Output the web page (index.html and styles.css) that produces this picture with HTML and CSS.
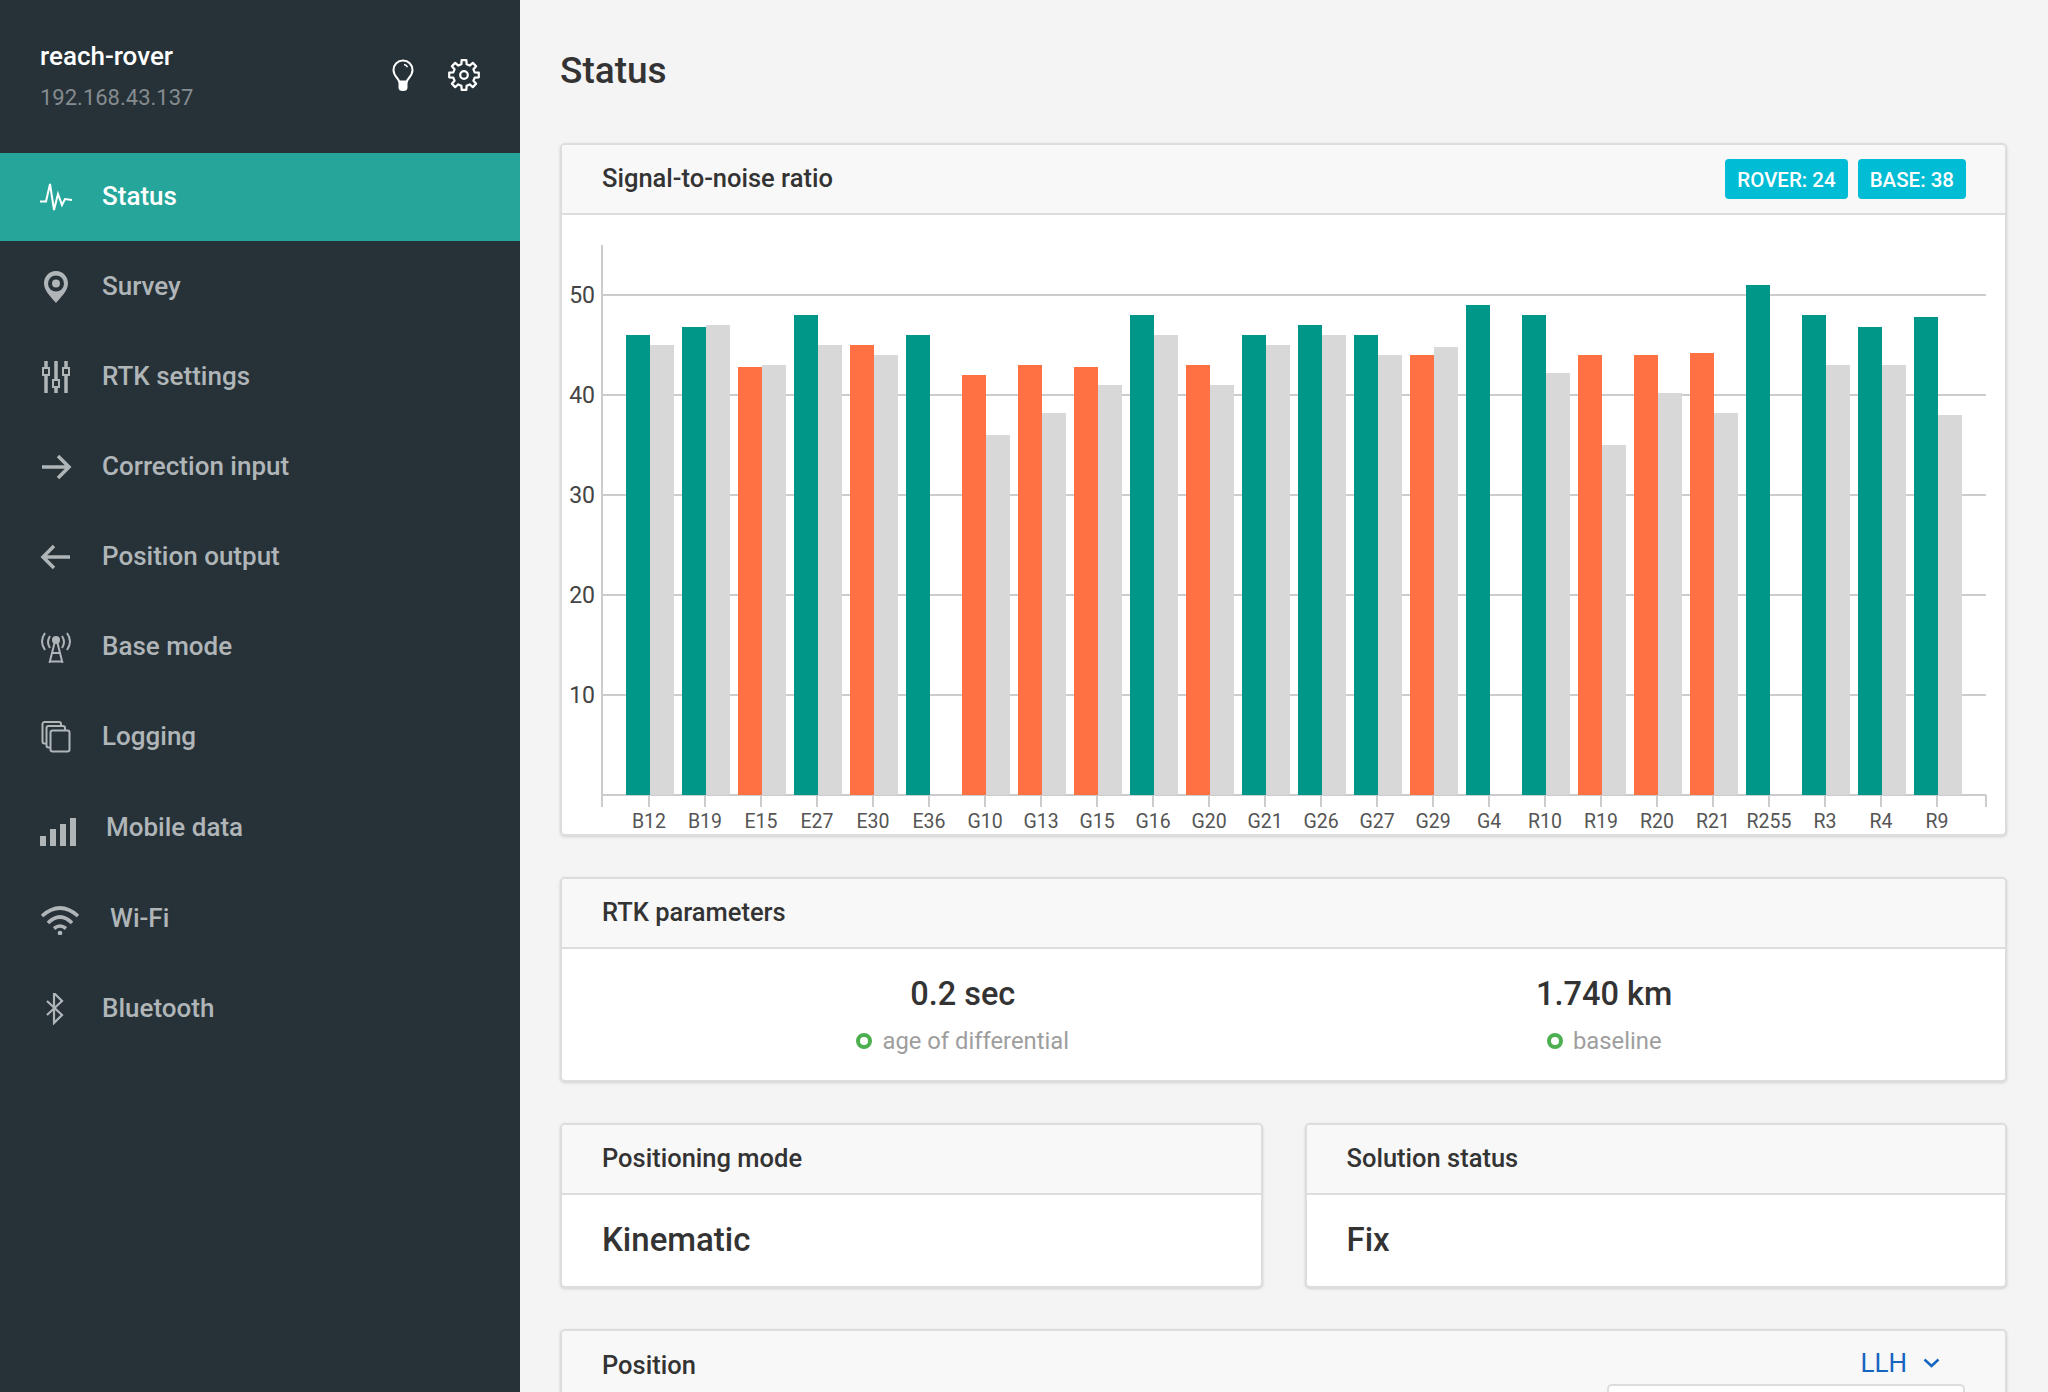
FILE: index.html
```html
<!DOCTYPE html>
<html lang="en">
<head>
    <meta charset="UTF-8">
    <title>Status - reach-rover</title>
    <link rel="stylesheet" href="styles.css">
</head>
<body>

    <aside class="sidebar">
        <div class="device">
            <div class="device-info">
                <div class="device-name">reach-rover</div>
                <div class="device-ip">192.168.43.137</div>
            </div>
            <svg class="device-icon bulb" viewBox="0 0 24 32">
                <path d="M8 22.500c0-3-5.500-5-5.500-11.500a9.500 9.500 0 0 1 19 0c0 6.500-5.500 8.500-5.500 11.500z" fill="none" stroke="#fff" stroke-width="2"/>
                <path d="M7.500 22h9v6.500a4.500 3.500 0 0 1-9 0z" fill="#fff"/>
                <path d="M13 5.500c1.500.3 2.800 1.200 3.500 2.600" fill="none" stroke="#fff" stroke-width="1.400"/>
            </svg>
            <svg class="device-icon gear" viewBox="0 0 32 32">
                <path d="M13.340 5.330L13.650 1.200H18.350L18.660 5.330L21.670 6.570L24.820 3.860L28.140 7.180L25.430 10.330L26.670 13.340L30.800 13.650V18.350L26.670 18.660L25.430 21.670L28.140 24.820L24.820 28.140L21.670 25.430L18.660 26.670L18.350 30.800H13.650L13.340 26.670L10.330 25.430L7.180 28.140L3.860 24.820L6.570 21.670L5.330 18.660L1.200 18.350V13.650L5.330 13.340L6.570 10.330L3.860 7.180L7.180 3.860L10.330 6.570z" fill="none" stroke="#fff" stroke-width="2.200" stroke-linejoin="round"/>
                <circle cx="16" cy="16" r="3.800" fill="none" stroke="#fff" stroke-width="2.200"/>
            </svg>
        </div>

        <nav class="menu">
            <a class="menu-item active" href="#">
                <svg class="menu-icon" width="32" height="32" viewBox="0 0 32 32">
                    <path class="line thin" d="M0 20.500H6L10 3L14 29L18 13L22 24L25 18L32 19"/>
                </svg>
                <span class="menu-label">Status</span>
            </a>
            <a class="menu-item" href="#">
                <svg class="menu-icon" width="32" height="32" viewBox="0 0 32 32">
                    <path class="fill" d="M16 0C9 0 4 5.500 4 12.500C4 20 12 27 16 32C20 27 28 20 28 12.500C28 5.500 23 0 16 0z"/>
                    <circle cx="16" cy="12.500" r="8" fill="#263238"/>
                    <circle class="fill" cx="16" cy="12.500" r="4"/>
                </svg>
                <span class="menu-label">Survey</span>
            </a>
            <a class="menu-item" href="#">
                <svg class="menu-icon" width="32" height="32" viewBox="0 0 32 32">
                    <path class="line" d="M6 0V7M6 14V32M16 0V19M16 26V32M26 0V7M26 14V32"/>
                    <path class="line thin" d="M3 7h6v7H3zM13 19h6v7h-6zM23 7h6v7h-6z"/>
                </svg>
                <span class="menu-label">RTK settings</span>
            </a>
            <a class="menu-item" href="#">
                <svg class="menu-icon" width="32" height="32" viewBox="0 0 32 32">
                    <path class="line" d="M2 16H29M18 5L29 16L18 27"/>
                </svg>
                <span class="menu-label">Correction input</span>
            </a>
            <a class="menu-item" href="#">
                <svg class="menu-icon" width="32" height="32" viewBox="0 0 32 32">
                    <path class="line" d="M30 16H3M14 5L3 16L14 27"/>
                </svg>
                <span class="menu-label">Position output</span>
            </a>
            <a class="menu-item" href="#">
                <svg class="menu-icon" width="32" height="32" viewBox="0 0 32 32">
                    <circle class="fill" cx="16" cy="9" r="4"/>
                    <path class="line thin" d="M14.500 12L9.500 32M17.500 12L22.500 32M12.500 22H19.500M10 30.500H22"/>
                    <path class="line thin" d="M5 2Q-1 10.500 5 19M10 5Q6 11 10 17M27 2Q33 10.500 27 19M22 5Q26 11 22 17"/>
                </svg>
                <span class="menu-label">Base mode</span>
            </a>
            <a class="menu-item" href="#">
                <svg class="menu-icon" width="32" height="32" viewBox="0 0 32 32">
                    <rect class="line thin" x="10.500" y="9.500" width="19" height="21" rx="2"/>
                    <path class="line thin" d="M10.500 26.500H8.500a2 2 0 0 1-2-2V7a2 2 0 0 1 2-2H23a2 2 0 0 1 2 2v2.500"/>
                    <path class="line thin" d="M6.500 22.500H4.500a2 2 0 0 1-2-2V3a2 2 0 0 1 2-2H19a2 2 0 0 1 2 2v2"/>
                </svg>
                <span class="menu-label">Logging</span>
            </a>
            <a class="menu-item tall" href="#">
                <svg class="menu-icon" width="36" height="36" viewBox="0 0 36 36">
                    <path class="fill" d="M0 26h6v10H0zM10 19h6v17h-6zM20 14h6v22h-6zM30 8h6v28h-6z"/>
                </svg>
                <span class="menu-label">Mobile data</span>
            </a>
            <a class="menu-item" href="#">
                <svg class="menu-icon" width="40" height="32" viewBox="0 0 40 32">
                    <path class="line wifi" d="M2 13Q20 -3 38 13M8 20Q20 8 32 20M14 25.500Q20 20.500 26 25.500"/>
                    <circle class="fill" cx="20" cy="30" r="2.300"/>
                </svg>
                <span class="menu-label">Wi-Fi</span>
            </a>
            <a class="menu-item" href="#">
                <svg class="menu-icon" width="32" height="32" viewBox="0 0 32 32">
                    <path class="line bt" d="M7 8L22 22L14 30V0L22 8L7 22"/>
                </svg>
                <span class="menu-label">Bluetooth</span>
            </a>
        </nav>
    </aside>

    <main class="content">
        <h1 class="page-title">Status</h1>

        <section class="card snr-card">
            <header class="card-head">
                <h2 class="card-title">Signal-to-noise ratio</h2>
                <div class="badges">
                    <span class="badge">ROVER: 24</span>
                    <span class="badge">BASE: 38</span>
                </div>
            </header>
            <svg class="chart" width="1443" height="619" viewBox="562 215 1443 619">
                <g class="grid">
                    <path d="M602 245V807M602 295H1986M602 395H1986M602 495H1986M602 595H1986M602 695H1986M602 795H1986"/>
                    <path d="M649 795v12M705 795v12M761 795v12M817 795v12M873 795v12M929 795v12M985 795v12M1041 795v12M1097 795v12M1153 795v12M1209 795v12M1265 795v12M1321 795v12M1377 795v12M1433 795v12M1489 795v12M1545 795v12M1601 795v12M1657 795v12M1713 795v12M1769 795v12M1825 795v12M1881 795v12M1937 795v12M1986 795v12"/>
                </g>
                <g class="y-labels">
                    <text x="595" y="303">50</text>
                    <text x="595" y="403">40</text>
                    <text x="595" y="503">30</text>
                    <text x="595" y="603">20</text>
                    <text x="595" y="703">10</text>
                </g>
                <g class="bars">
                    <rect class="fix" x="626" y="335" width="24" height="460"/><rect class="base" x="650" y="345" width="24" height="450"/>
                    <rect class="fix" x="682" y="327" width="24" height="468"/><rect class="base" x="706" y="325" width="24" height="470"/>
                    <rect class="float" x="738" y="367" width="24" height="428"/><rect class="base" x="762" y="365" width="24" height="430"/>
                    <rect class="fix" x="794" y="315" width="24" height="480"/><rect class="base" x="818" y="345" width="24" height="450"/>
                    <rect class="float" x="850" y="345" width="24" height="450"/><rect class="base" x="874" y="355" width="24" height="440"/>
                    <rect class="fix" x="906" y="335" width="24" height="460"/>
                    <rect class="float" x="962" y="375" width="24" height="420"/><rect class="base" x="986" y="435" width="24" height="360"/>
                    <rect class="float" x="1018" y="365" width="24" height="430"/><rect class="base" x="1042" y="413" width="24" height="382"/>
                    <rect class="float" x="1074" y="367" width="24" height="428"/><rect class="base" x="1098" y="385" width="24" height="410"/>
                    <rect class="fix" x="1130" y="315" width="24" height="480"/><rect class="base" x="1154" y="335" width="24" height="460"/>
                    <rect class="float" x="1186" y="365" width="24" height="430"/><rect class="base" x="1210" y="385" width="24" height="410"/>
                    <rect class="fix" x="1242" y="335" width="24" height="460"/><rect class="base" x="1266" y="345" width="24" height="450"/>
                    <rect class="fix" x="1298" y="325" width="24" height="470"/><rect class="base" x="1322" y="335" width="24" height="460"/>
                    <rect class="fix" x="1354" y="335" width="24" height="460"/><rect class="base" x="1378" y="355" width="24" height="440"/>
                    <rect class="float" x="1410" y="355" width="24" height="440"/><rect class="base" x="1434" y="347" width="24" height="448"/>
                    <rect class="fix" x="1466" y="305" width="24" height="490"/>
                    <rect class="fix" x="1522" y="315" width="24" height="480"/><rect class="base" x="1546" y="373" width="24" height="422"/>
                    <rect class="float" x="1578" y="355" width="24" height="440"/><rect class="base" x="1602" y="445" width="24" height="350"/>
                    <rect class="float" x="1634" y="355" width="24" height="440"/><rect class="base" x="1658" y="393" width="24" height="402"/>
                    <rect class="float" x="1690" y="353" width="24" height="442"/><rect class="base" x="1714" y="413" width="24" height="382"/>
                    <rect class="fix" x="1746" y="285" width="24" height="510"/>
                    <rect class="fix" x="1802" y="315" width="24" height="480"/><rect class="base" x="1826" y="365" width="24" height="430"/>
                    <rect class="fix" x="1858" y="327" width="24" height="468"/><rect class="base" x="1882" y="365" width="24" height="430"/>
                    <rect class="fix" x="1914" y="317" width="24" height="478"/><rect class="base" x="1938" y="415" width="24" height="380"/>
                </g>
                <g class="x-labels">
                    <text x="649" y="828">B12</text>
                    <text x="705" y="828">B19</text>
                    <text x="761" y="828">E15</text>
                    <text x="817" y="828">E27</text>
                    <text x="873" y="828">E30</text>
                    <text x="929" y="828">E36</text>
                    <text x="985" y="828">G10</text>
                    <text x="1041" y="828">G13</text>
                    <text x="1097" y="828">G15</text>
                    <text x="1153" y="828">G16</text>
                    <text x="1209" y="828">G20</text>
                    <text x="1265" y="828">G21</text>
                    <text x="1321" y="828">G26</text>
                    <text x="1377" y="828">G27</text>
                    <text x="1433" y="828">G29</text>
                    <text x="1489" y="828">G4</text>
                    <text x="1545" y="828">R10</text>
                    <text x="1601" y="828">R19</text>
                    <text x="1657" y="828">R20</text>
                    <text x="1713" y="828">R21</text>
                    <text x="1769" y="828">R255</text>
                    <text x="1825" y="828">R3</text>
                    <text x="1881" y="828">R4</text>
                    <text x="1937" y="828">R9</text>
                </g>
            </svg>
        </section>

        <section class="card rtk-card">
            <header class="card-head">
                <h2 class="card-title">RTK parameters</h2>
            </header>
            <div class="params">
                <div class="param">
                    <div class="param-value">0.2 sec</div>
                    <div class="param-label"><span class="dot"></span>age of differential</div>
                </div>
                <div class="param">
                    <div class="param-value">1.740 km</div>
                    <div class="param-label"><span class="dot"></span>baseline</div>
                </div>
            </div>
        </section>

        <div class="card-row">
            <section class="card">
                <header class="card-head">
                    <h2 class="card-title">Positioning mode</h2>
                </header>
                <div class="big-value">Kinematic</div>
            </section>
            <section class="card">
                <header class="card-head">
                    <h2 class="card-title">Solution status</h2>
                </header>
                <div class="big-value">Fix</div>
            </section>
        </div>

        <section class="card position-card">
            <div class="position-head">
                <h2 class="card-title">Position</h2>
                <span class="format">LLH
                    <svg width="17" height="10" viewBox="0 0 17 10"><path d="M1.500 1.500L8.500 8L15.500 1.500" fill="none" stroke="#1565c0" stroke-width="2.400"/></svg>
                </span>
            </div>
            <div class="position-box"></div>
        </section>
    </main>

</body>
</html>
```

FILE: styles.css
```css
* {
    margin: 0;
    padding: 0;
    box-sizing: border-box;
    font-family: 'Roboto', sans-serif;
}

body {
    display: flex;
    height: 100vh;
    overflow: hidden;
    background: #f4f4f4;
    color: #333;
}

/* sidebar */

.sidebar {
    width: 520px;
    flex-shrink: 0;
    background: #263238;
}

.device {
    display: flex;
    align-items: flex-start;
    height: 153px;
    padding: 40px 40px 0;
}

.device-info {
    flex: 1;
}

.device-name {
    font-size: 26px;
    font-weight: 500;
    line-height: 32px;
    color: #fff;
}

.device-ip {
    margin-top: 10px;
    font-size: 22px;
    line-height: 32px;
    color: #858b8f;
}

.device-icon {
    height: 32px;
    margin-top: 19px;
}

.bulb {
    width: 24px;
    margin-right: 33px;
}

.gear {
    width: 32px;
}

.menu-item {
    display: flex;
    align-items: center;
    height: 88px;
    margin-bottom: 2px;
    padding-left: 40px;
    font-size: 26px;
    font-weight: 500;
    color: #b0b5b8;
    text-decoration: none;
}

.menu-item.tall {
    height: 90px;
}

.menu-item.active {
    background: #26a69a;
    color: #fff;
}

.menu-label {
    margin-bottom: 2px;
}

.menu-icon {
    flex-shrink: 0;
    margin-right: 30px;
}

.menu-icon .line {
    fill: none;
    stroke: #b0b5b8;
    stroke-width: 3.5;
}

.menu-icon .thin {
    stroke-width: 2;
}

.menu-icon .wifi {
    stroke-width: 3.6;
}

.menu-icon .bt {
    stroke-width: 2.2;
}

.menu-icon .fill {
    fill: #b0b5b8;
}

.active .menu-icon .line {
    stroke: #fff;
}

/* main area */

.content {
    flex: 1;
    padding: 0 41px 0 40px;
}

.page-title {
    height: 143px;
    padding-top: 48px;
    font-size: 37px;
    font-weight: 500;
    line-height: 46px;
}

.card {
    margin-bottom: 41px;
    background: #fff;
    border: 2px solid #ddd;
    border-radius: 5px;
    box-shadow: 0 1px 3px rgba(0, 0, 0, 0.15);
}

.card-head {
    display: flex;
    align-items: center;
    justify-content: space-between;
    height: 70px;
    padding: 0 39px 0 40px;
    background: #f8f8f8;
    border-bottom: 2px solid #ddd;
    border-radius: 3px 3px 0 0;
}

.card-title {
    margin-bottom: 2px;
    font-size: 25.5px;
    font-weight: 500;
    color: #333;
}

.badges {
    display: flex;
    gap: 10px;
}

.badge {
    height: 40px;
    padding: 0 12px;
    font-size: 20.5px;
    font-weight: 500;
    line-height: 43px;
    color: #fff;
    background: #00bcd4;
    border-radius: 4px;
}

/* chart */

.chart {
    display: block;
}

.grid path {
    fill: none;
    stroke: #ccc;
    stroke-width: 2;
}

.y-labels text {
    font-size: 23px;
    text-anchor: end;
    fill: #444;
}

.x-labels text {
    font-size: 19.5px;
    text-anchor: middle;
    fill: #555;
}

.bars .fix {
    fill: #009688;
}

.bars .float {
    fill: #ff7043;
}

.bars .base {
    fill: #d8d8d8;
}

/* RTK parameters */

.params {
    display: flex;
    height: 131px;
    padding: 0 80px;
}

.param {
    flex: 1;
    text-align: center;
}

.param-value {
    margin-top: 25px;
    font-size: 32.5px;
    font-weight: 500;
    line-height: 40px;
    color: #333;
}

.param-label {
    display: flex;
    align-items: center;
    justify-content: center;
    margin-top: 11px;
    font-size: 23.8px;
    line-height: 32px;
    color: #9e9e9e;
}

.dot {
    width: 16px;
    height: 16px;
    margin-right: 10px;
    border: 4px solid #4caf50;
    border-radius: 50%;
}

/* mode + solution */

.card-row {
    display: grid;
    grid-template-columns: 1fr 1fr;
    gap: 42px;
}

.big-value {
    height: 91px;
    padding: 0 40px;
    font-size: 33px;
    font-weight: 500;
    line-height: 90px;
    color: #333;
}

/* position */

.position-card {
    background: #f8f8f8;
    height: 200px;
}

.position-head {
    display: flex;
    align-items: center;
    justify-content: space-between;
    height: 70px;
    padding: 0 65px 0 40px;
}

.format {
    display: flex;
    align-items: center;
    gap: 16px;
    margin-bottom: 6px;
    font-size: 26px;
    color: #1565c0;
}

.position-box {
    height: 100px;
    margin: -17px 40px 0 auto;
    width: 358px;
    background: #fff;
    border: 2px solid #ddd;
    border-radius: 5px;
}
```
